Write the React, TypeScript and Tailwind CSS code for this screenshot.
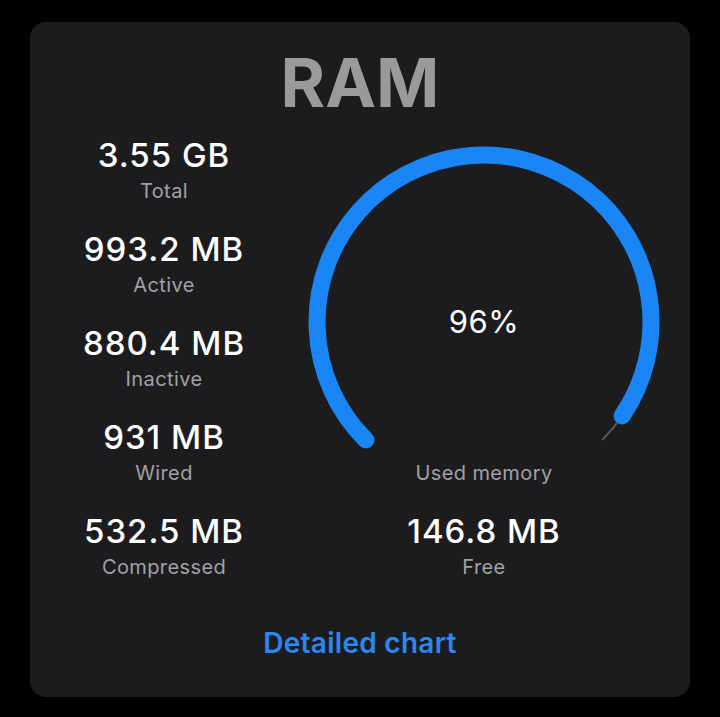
const stats = [
  { value: '3.55 GB', label: 'Total' },
  { value: '993.2 MB', label: 'Active' },
  { value: '880.4 MB', label: 'Inactive' },
  { value: '931 MB', label: 'Wired' },
  { value: '532.5 MB', label: 'Compressed' },
];

const Stat = ({ value, label }: { value: string; label: string }) => (
  <div className="h-[94px] flex flex-col items-center">
    <div className="text-[33px] leading-[36px] font-medium text-white tracking-[0.03em]">{value}</div>
    <div className="mt-[5px] text-[20px] leading-[26px] text-[#a1a1a6] tracking-[0.02em]">{label}</div>
  </div>
);

const point = (cx: number, cy: number, r: number, deg: number) => {
  const a = (deg * Math.PI) / 180;
  return [cx + r * Math.cos(a), cy + r * Math.sin(a)];
};

const Gauge = ({ percent }: { percent: number }) => {
  const cx = 186;
  const cy = 185;
  const r = 167;
  const start = 135;
  const end = start + 270 * (percent / 100);
  const [sx, sy] = point(cx, cy, r, start);
  const [ex, ey] = point(cx, cy, r, end);
  const [tx, ty] = point(cx, cy, r, 405);
  const large = end - start > 180 ? 1 : 0;

  return (
    <div className="relative w-[372px] h-[323px]">
      <svg width="372" height="323" viewBox="0 0 372 323">
        <path
          d={`M ${sx} ${sy} A ${r} ${r} 0 1 1 ${tx} ${ty}`}
          fill="none"
          stroke="#5a5a5e"
          strokeWidth="2"
        />
        <path
          d={`M ${sx} ${sy} A ${r} ${r} 0 ${large} 1 ${ex} ${ey}`}
          fill="none"
          stroke="#1a86f5"
          strokeWidth="17"
          strokeLinecap="round"
        />
      </svg>
      <div className="absolute left-0 right-0 top-[166px] text-center text-[31px] leading-[38px] text-white tracking-[0.02em]">
        {percent}%
      </div>
    </div>
  );
};

export default function App() {
  return (
    <div className="w-[720px] h-[717px] bg-black pt-[22px] px-[30px]" style={{ fontFamily: 'Inter, "Liberation Sans", sans-serif' }}>
      <div className="w-[660px] h-[675px] bg-[#1c1c1e] rounded-[16px] flex flex-col items-center">
        <div className="mt-[20px] text-[68px] leading-[80px] font-bold text-[#9a9a9c]">RAM</div>
        <div className="mt-[15px] w-full flex">
          <div className="w-[268px] flex flex-col">
            {stats.map((s) => (
              <Stat key={s.label} value={s.value} label={s.label} />
            ))}
          </div>
          <div className="w-[372px] flex flex-col items-center">
            <Gauge percent={96} />
            <div className="text-[20px] leading-[26px] text-[#a1a1a6] tracking-[0.02em]">Used memory</div>
            <div className="mt-[27px]">
              <Stat value="146.8 MB" label="Free" />
            </div>
          </div>
        </div>
        <div className="mt-[20px] text-[28px] leading-[32px] font-semibold text-[#2a88ee] tracking-[0.01em]">Detailed chart</div>
      </div>
    </div>
  );
}
